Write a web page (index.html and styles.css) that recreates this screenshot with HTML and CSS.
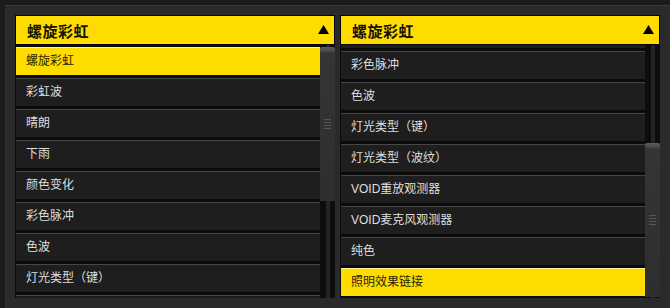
FILE: index.html
```html
<!DOCTYPE html>
<html lang="zh-CN">
<head>
  <meta charset="UTF-8">
  <title>灯光效果</title>
  <link rel="stylesheet" href="styles.css">
</head>
<body>
<div class="frame">
  <div class="panels">

    <div class="panel">
      <div class="dd-head">
        <span class="dd-title">螺旋彩虹</span>
        <svg class="dd-arrow" width="11" height="9" viewBox="0 0 11 9"><path d="M5.5 0 L11 9 L0 9 Z" fill="#000"/></svg>
      </div>
      <div class="dd-list">
        <div class="dd-items">
          <div class="dd-item selected">螺旋彩虹</div>
          <div class="dd-item">彩虹波</div>
          <div class="dd-item">晴朗</div>
          <div class="dd-item">下雨</div>
          <div class="dd-item">颜色变化</div>
          <div class="dd-item">彩色脉冲</div>
          <div class="dd-item">色波</div>
          <div class="dd-item">灯光类型（键）</div>
          <div class="dd-item partial"></div>
        </div>
        <div class="scrollbar">
          <div class="thumb thumb-top">
            <div class="grip"></div>
          </div>
        </div>
      </div>
    </div>

    <div class="panel">
      <div class="dd-head">
        <span class="dd-title">螺旋彩虹</span>
        <svg class="dd-arrow" width="11" height="9" viewBox="0 0 11 9"><path d="M5.5 0 L11 9 L0 9 Z" fill="#000"/></svg>
      </div>
      <div class="dd-list">
        <div class="dd-items scrolled">
          <div class="dd-item partial"></div>
          <div class="dd-item">彩色脉冲</div>
          <div class="dd-item">色波</div>
          <div class="dd-item">灯光类型（键）</div>
          <div class="dd-item">灯光类型（波纹）</div>
          <div class="dd-item">VOID重放观测器</div>
          <div class="dd-item">VOID麦克风观测器</div>
          <div class="dd-item">纯色</div>
          <div class="dd-item selected">照明效果链接</div>
        </div>
        <div class="scrollbar">
          <div class="thumb thumb-bottom">
            <div class="grip"></div>
          </div>
        </div>
      </div>
    </div>

  </div>
</div>
</body>
</html>
```

FILE: styles.css
```css
html, body {
  margin: 0;
  padding: 0;
}
body {
  background: #1b1b1b;
  font-family: "Liberation Sans", "Noto Sans CJK SC", sans-serif;
  width: 670px;
  height: 308px;
  overflow: hidden;
}
.frame {
  margin: 5px 0 0 5px;
  height: 303px;
  background: #2a2a2a;
  border-top: 1px solid #393939;
  border-left: 1px solid #303030;
  padding: 9px 0 0 9px;
  box-sizing: border-box;
}
.panels {
  display: flex;
  gap: 5px;
}
.panel {
  width: 320px;
  display: flex;
  flex-direction: column;
}
.dd-head {
  height: 28px;
  background: #ffdc00;
  border: 1px solid #050505;
  display: flex;
  align-items: center;
  justify-content: space-between;
  padding: 0 5px 0 11px;
}
.dd-title {
  font-size: 15px;
  font-weight: bold;
  color: #141200;
  letter-spacing: 0.5px;
}
.dd-arrow {
  margin-top: -1px;
}
.dd-list {
  height: 253px;
  background: #0b0b0b;
  display: flex;
  overflow: hidden;
  padding-left: 1px;
}
.dd-items {
  width: 304px;
  padding-top: 2px;
}
.dd-items.scrolled {
  margin-top: -27px;
}
.dd-item {
  height: 27px;
  line-height: 27px;
  border-top: 1px solid #464646;
  background: #1e1e1e;
  margin-bottom: 3px;
  padding-left: 10px;
  font-size: 12px;
  color: #dedede;
}
.dd-item.selected {
  background: #ffdc00;
  border-top-color: #fff08a;
  color: #2a2500;
}
.scrollbar {
  width: 15px;
  background: linear-gradient(to right, #0d0d0d 0, #0d0d0d 6px, #242424 6px, #242424 10px, #0d0d0d 10px);
}
.thumb {
  height: 154px;
  background: linear-gradient(to bottom, #5c5c5c 0, #4a4a4a 4px, #353535 6px, #2e2e2e 100%);
  border-radius: 2px 2px 0 0;
  display: flex;
  align-items: center;
  justify-content: center;
}
.thumb-top {
  margin-top: 2px;
}
.thumb-bottom {
  margin-top: 98px;
}
.grip {
  width: 7px;
  height: 10px;
  background: repeating-linear-gradient(to bottom, #555 0, #555 1px, transparent 1px, transparent 3px);
}
```
